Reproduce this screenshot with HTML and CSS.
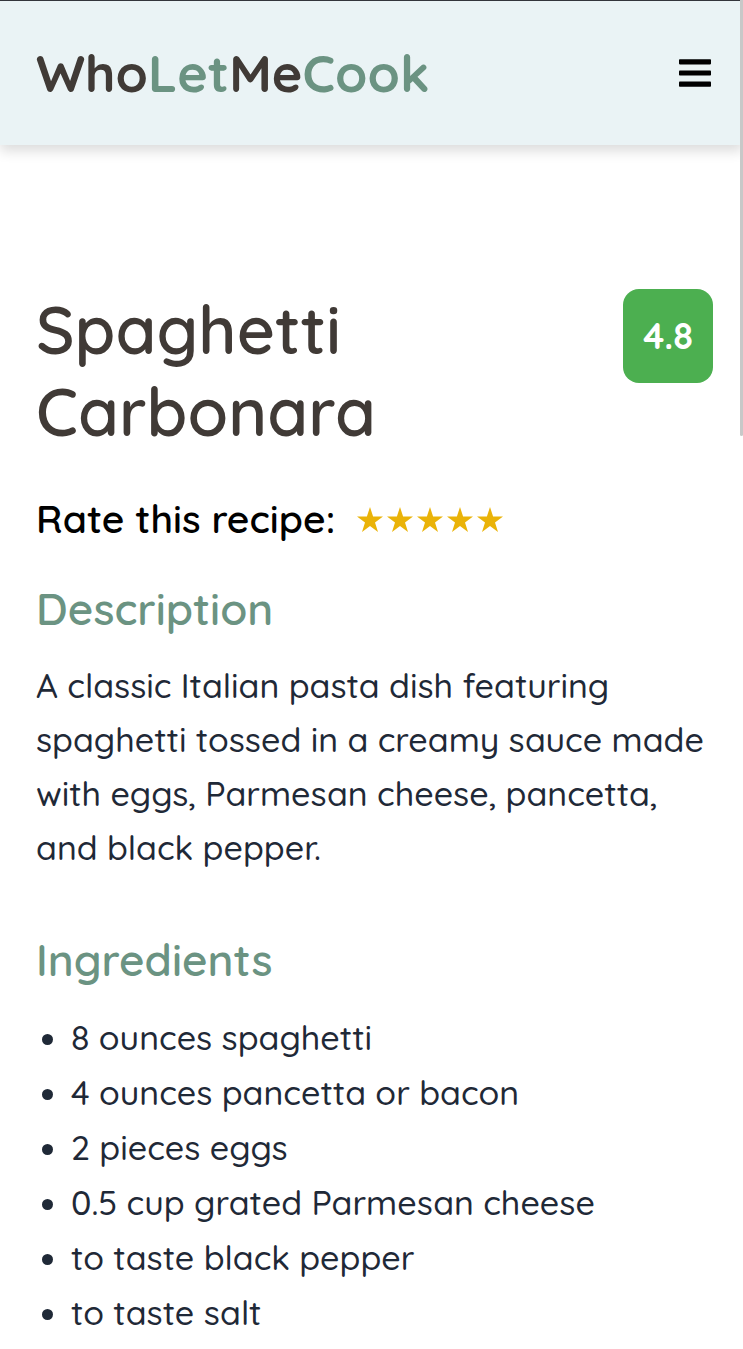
FILE: index.html
```html
<!DOCTYPE html>
<html lang="en">
<head>
<meta charset="utf-8">
<meta name="viewport" content="width=device-width, initial-scale=1">
<title>WhoLetMeCook</title>
<link rel="stylesheet" href="styles.css">
</head>
<body>
<header class="site-header">
  <a class="brand" href="#">Who<span class="accent">Let</span>Me<span class="accent">Cook</span></a>
  <button class="menu-button" type="button" aria-label="Open menu">
    <svg class="menu-icon" viewBox="0 0 32 28" aria-hidden="true"><rect y="0.2" width="32" height="5.2" rx="0.8"/><rect y="11.4" width="32" height="5.2" rx="0.8"/><rect y="22.6" width="32" height="5.2" rx="0.8"/></svg>
  </button>
</header>
<main class="recipe">
  <div class="title-row">
    <h1 class="title">Spaghetti Carbonara</h1>
    <span class="score">4.8</span>
  </div>
  <div class="rating">
    <span class="rating-label">Rate this recipe:</span>
    <div class="stars">
      <button class="star" type="button" aria-label="1 star"><svg viewBox="0 0 26 25"><path d="M13 0l3.1 9.5H26l-8 5.9 3 9.6-8-5.9L5 25l3-9.6-8-5.9h9.9z"/></svg></button>
      <button class="star" type="button" aria-label="2 stars"><svg viewBox="0 0 26 25"><path d="M13 0l3.1 9.5H26l-8 5.9 3 9.6-8-5.9L5 25l3-9.6-8-5.9h9.9z"/></svg></button>
      <button class="star" type="button" aria-label="3 stars"><svg viewBox="0 0 26 25"><path d="M13 0l3.1 9.5H26l-8 5.9 3 9.6-8-5.9L5 25l3-9.6-8-5.9h9.9z"/></svg></button>
      <button class="star" type="button" aria-label="4 stars"><svg viewBox="0 0 26 25"><path d="M13 0l3.1 9.5H26l-8 5.9 3 9.6-8-5.9L5 25l3-9.6-8-5.9h9.9z"/></svg></button>
      <button class="star" type="button" aria-label="5 stars"><svg viewBox="0 0 26 25"><path d="M13 0l3.1 9.5H26l-8 5.9 3 9.6-8-5.9L5 25l3-9.6-8-5.9h9.9z"/></svg></button>
    </div>
  </div>
  <section class="description">
    <h2 class="section-title">Description</h2>
    <p class="text">A classic Italian pasta dish featuring spaghetti tossed in a creamy sauce made with eggs, Parmesan cheese, pancetta, and black pepper.</p>
  </section>
  <section class="ingredients">
    <h2 class="section-title">Ingredients</h2>
    <ul class="list">
      <li>8 ounces spaghetti</li>
      <li>4 ounces pancetta or bacon</li>
      <li>2 pieces eggs</li>
      <li>0.5 cup grated Parmesan cheese</li>
      <li>to taste black pepper</li>
      <li>to taste salt</li>
    </ul>
  </section>
</main>
<div class="scroll-thumb" aria-hidden="true"></div>
</body>
</html>
```

FILE: styles.css
```css
* { box-sizing: border-box; margin: 0; padding: 0; }
body {
  font-family: Quicksand, Lato, "Liberation Sans", sans-serif;
  font-weight: 500;
  background: #fff;
  color: #1f2937;
}
.site-header {
  display: flex;
  align-items: center;
  justify-content: space-between;
  padding: 36px 32px 36px 36px;
  border-top: 1px solid #33353b;
  background: #eaf3f5;
  box-shadow: 0 6px 12px rgba(0, 0, 0, 0.14);
}
.brand {
  font-size: 52px;
  line-height: 72px;
  font-weight: 700;
  color: #403a36;
  text-decoration: none;
}
.accent { color: #6b9382; }
.menu-button { display: flex; border: 0; background: none; }
.menu-icon { width: 32px; height: 28px; fill: #000; }
.recipe { padding: 144px 30px 0 36px; }
.title-row { display: flex; align-items: flex-start; justify-content: space-between; gap: 40px; }
.title { max-width: 400px; font-size: 66px; line-height: 82px; font-weight: 600; color: #403a36; }
.score {
  padding: 20px;
  border-radius: 16px;
  background: #4caf50;
  color: #fff;
  font-size: 36px;
  line-height: 54px;
  font-weight: 700;
}
.rating { display: flex; align-items: center; gap: 22px; margin-top: 36px; }
.rating-label { font-size: 39px; line-height: 60px; font-weight: 600; color: #000; }
.stars { display: flex; gap: 4px; }
.star { width: 26px; height: 26px; border: 0; background: none; }
.star svg { display: block; width: 100%; fill: #eab308; }
.description { margin-top: 30px; }
.ingredients { margin-top: 55px; }
.section-title { font-size: 44px; line-height: 60px; font-weight: 600; color: #6b9382; }
.text { margin-top: 20px; font-size: 34px; line-height: 54px; }
.list { margin-top: 20px; padding-left: 35px; font-size: 34px; line-height: 55px; }
.scroll-thumb { position: absolute; top: 0; right: 0; width: 3px; height: 436px; border-radius: 0 0 2px 2px; background: #c8c8c8; }
```
